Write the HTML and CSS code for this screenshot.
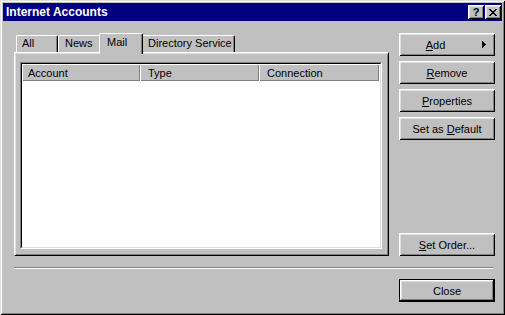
FILE: index.html
```html
<!DOCTYPE html>
<html lang="en">
<head>
    <meta charset="UTF-8">
    <title>Internet Accounts</title>
    <link rel="stylesheet" href="styles.css">
</head>
<body>
    <div class="window">
        <div class="titlebar">
            <span class="title">Internet Accounts</span>
            <div class="caption-buttons">
                <span class="cap-btn help">?</span>
                <span class="cap-btn">
                    <svg width="8" height="7" viewBox="0 0 8 7" shape-rendering="crispEdges">
                        <path fill="#000" d="M0 0h2v1h-2z M6 0h2v1h-2z M1 1h2v1h-2z M5 1h2v1h-2z M2 2h4v1h-4z M3 3h2v1h-2z M2 4h4v1h-4z M1 5h2v1h-2z M5 5h2v1h-2z M0 6h2v1h-2z M6 6h2v1h-2z"/>
                    </svg>
                </span>
            </div>
        </div>

        <div class="content">
            <div class="left">
                <div class="tabs">
                    <div class="tab tab-all">All</div>
                    <div class="tab tab-news">News</div>
                    <div class="tab tab-mail selected">Mail</div>
                    <div class="tab tab-dir">Directory Service</div>
                </div>
                <div class="panel">
                    <div class="list">
                        <div class="list-inner">
                            <div class="header">
                                <div class="col col-account">Account</div>
                                <div class="col col-type">Type</div>
                                <div class="col col-conn">Connection</div>
                                <div class="col col-fill"></div>
                            </div>
                        </div>
                    </div>
                </div>
            </div>

            <div class="actions">
                <button class="btn btn-add">
                    <span class="btn-label"><u>A</u>dd</span>
                    <svg class="arrow" width="4" height="7" viewBox="0 0 4 7" shape-rendering="crispEdges">
                        <path fill="#000" d="M0 0h1v7h-1z M1 1h1v5h-1z M2 2h1v3h-1z M3 3h1v1h-1z"/>
                    </svg>
                </button>
                <button class="btn"><u>R</u>emove</button>
                <button class="btn"><u>P</u>roperties</button>
                <button class="btn">Set as <u>D</u>efault</button>
                <button class="btn btn-order"><u>S</u>et Order...</button>
            </div>
        </div>

        <div class="separator"></div>

        <div class="footer">
            <button class="btn default">Close</button>
        </div>
    </div>
</body>
</html>
```

FILE: styles.css
```css
body {
    margin: 0;
    font-family: "Liberation Sans", Arial, sans-serif;
    font-size: 11px;
    background: #c0c0c0;
}
.window {
    width: 505px;
    height: 315px;
    box-sizing: border-box;
    padding: 3px;
    background: #c0c0c0;
    box-shadow: inset 1px 1px 0 #dfdfdf, inset -1px -1px 0 #000,
                inset 2px 2px 0 #fff, inset -2px -2px 0 #808080;
}
.titlebar {
    height: 18px;
    background: #000080;
    color: #fff;
    display: flex;
    align-items: center;
    padding: 0 1px 0 3px;
}
.title {
    font-weight: bold;
    font-size: 12px;
}
.caption-buttons {
    margin-left: auto;
    display: flex;
    gap: 1px;
}
.cap-btn {
    width: 16px;
    height: 14px;
    box-sizing: border-box;
    background: #c0c0c0;
    color: #000;
    display: flex;
    align-items: center;
    justify-content: center;
    box-shadow: inset 1px 1px 0 #fff, inset -1px -1px 0 #000,
                inset 2px 2px 0 #dfdfdf, inset -2px -2px 0 #808080;
}
.cap-btn.help {
    font-weight: bold;
    font-size: 11px;
    line-height: 14px;
}

/* main area */
.content {
    display: grid;
    grid-template-columns: 375px 96px;
    column-gap: 10px;
    margin: 12px 0 0 11px;
}
.tabs {
    display: flex;
    align-items: flex-end;
    height: 21px;
    padding-left: 2px;
}
.tab {
    height: 19px;
    box-sizing: border-box;
    border-left: 1px solid #fff;
    border-top: 1px solid #fff;
    border-right: 1px solid #000;
    border-radius: 2px 2px 0 0;
    box-shadow: inset -1px 0 0 #808080;
    background: #c0c0c0;
    padding: 1px 0 0 5px;
    line-height: 13px;
    white-space: nowrap;
}
.tab-all { width: 42px; }
.tab-news { width: 43px; padding-left: 6px; }
.tab-dir { width: 94px; padding-left: 6px; }
.tab.selected {
    position: relative;
    z-index: 1;
    width: 44px;
    height: 21px;
    margin: 0 -2px;
    padding: 2px 0 0 7px;
}
.panel {
    position: relative;
    z-index: 0;
    margin-top: -2px;
    height: 204px;
    box-sizing: border-box;
    background: #c0c0c0;
    border: 1px solid;
    border-color: #fff #000 #000 #fff;
    box-shadow: inset 1px 1px 0 #dfdfdf, inset -1px -1px 0 #808080;
    padding: 9px 6px 6px 5px;
}
.list {
    height: 100%;
    box-sizing: border-box;
    border: 1px solid;
    border-color: #808080 #fff #fff #808080;
}
.list-inner {
    height: 100%;
    box-sizing: border-box;
    border: 1px solid;
    border-color: #000 #dfdfdf #dfdfdf #000;
    background: #fff;
}
.header {
    display: flex;
    height: 17px;
}
.col {
    flex-shrink: 0;
    box-sizing: border-box;
    background: #c0c0c0;
    box-shadow: inset 1px 1px 0 #fff, inset -1px -1px 0 #808080;
    padding: 2px 0 0 8px;
    line-height: 14px;
    white-space: nowrap;
}
.col-account { width: 118px; padding-left: 6px; }
.col-type { width: 119px; }
.col-conn { width: 120px; }
.col-fill {
    flex: 1 1 0;
    padding: 0;
}

/* buttons */
.actions {
    display: flex;
    flex-direction: column;
    gap: 5px;
}
.btn {
    width: 96px;
    height: 23px;
    box-sizing: border-box;
    border: none;
    padding: 0;
    background: #c0c0c0;
    color: #000;
    font: inherit;
    box-shadow: inset 1px 1px 0 #fff, inset -1px -1px 0 #000,
                inset 2px 2px 0 #dfdfdf, inset -2px -2px 0 #808080;
}
.btn-add {
    display: flex;
    align-items: center;
}
.btn-label {
    flex: 1;
    text-align: center;
    padding-right: 10px;
}
.arrow {
    margin-right: 9px;
}
.btn-order {
    margin-top: auto;
}
.btn.default {
    box-shadow: inset 0 0 0 1px #000, inset -2px -2px 0 #000,
                inset 2px 2px 0 #fff, inset -3px -3px 0 #808080,
                inset 3px 3px 0 #dfdfdf;
}
.separator {
    margin: 11px 9px 0 11px;
    border-top: 1px solid #808080;
    border-bottom: 1px solid #fff;
}
.footer {
    display: flex;
    justify-content: flex-end;
    margin-top: 10px;
    padding-right: 7px;
}
```
